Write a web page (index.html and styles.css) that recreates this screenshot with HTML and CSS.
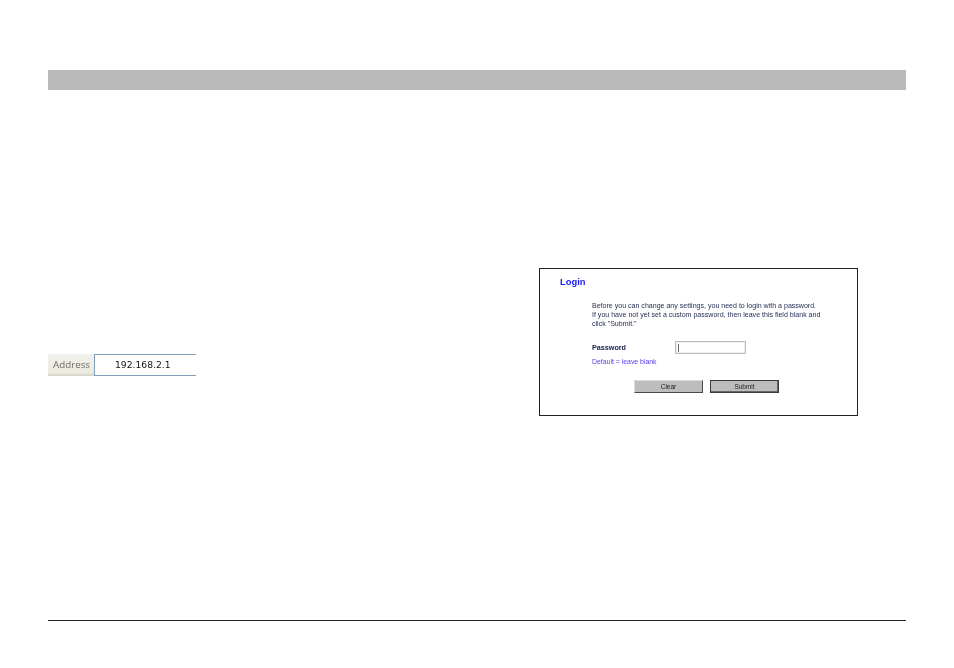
FILE: index.html
```html
<!DOCTYPE html>
<html lang="en">
<head>
<meta charset="utf-8">
<title>Login</title>
<link rel="stylesheet" href="styles.css">
</head>
<body>
<div class="page">
  <div class="header-bar"></div>
  <main class="content">
    <section class="left">
      <div class="address">
        <span class="address-label">Address</span>
        <span class="address-value">192.168.2.1</span>
      </div>
    </section>
    <section class="right">
      <div class="login">
        <h1 class="login-title">Login</h1>
        <div class="login-body">
          <p class="login-text">Before you can change any settings, you need to login with a password.<br>If you have not yet set a custom password, then leave this field blank and<br>click "Submit."</p>
          <div class="password-row">
            <span class="password-label">Password</span>
            <span class="password-input"><span class="caret"></span></span>
          </div>
          <p class="hint">Default = leave blank</p>
        </div>
        <div class="buttons">
          <span class="btn">Clear</span>
          <span class="btn btn-default">Submit</span>
        </div>
      </div>
    </section>
  </main>
  <div class="footer-line"></div>
</div>
</body>
</html>
```

FILE: styles.css
```css
* { box-sizing: border-box; }
html, body { margin: 0; padding: 0; background: #fff; }
body { font-family: "Liberation Sans", Arial, sans-serif; }
.page { width: 954px; height: 668px; padding: 70px 48px 0; overflow: hidden; }
.header-bar { height: 20px; background: #bababa; }
.content { display: flex; height: 530px; }
.left { width: 491px; padding-top: 264px; }
.right { padding-top: 178px; }
.footer-line { height: 1px; background: #231f20; }

.address { display: flex; width: 148px; height: 22px; }
.address-label {
  width: 46px; padding: 0 0 1px 5px;
  display: flex; align-items: center;
  background: linear-gradient(#f1f0ea, #ecebe2 85%, #d4d2c4);
  color: #6f6e68; font-family: "Open Sans", sans-serif; font-size: 9.8px;
  filter: blur(0.35px);
}
.address-value {
  flex: 1; padding: 0 0 1px 20px;
  display: flex; align-items: center;
  border-top: 1px solid #7f9db9; border-bottom: 1px solid #7f9db9; border-left: 1px solid #7f9db9;
  color: #111; font-family: "DejaVu Sans", sans-serif; font-size: 9.2px;
  filter: blur(0.3px);
}

.login {
  width: 319px; height: 148px;
  border: 1px solid #231f20;
  padding: 7px 0 0 20px;
  color: #1f2a50;
}
.login-title { margin: 0; font-size: 9.4px; line-height: 12px; font-weight: bold; color: #2020f5; filter: blur(0.3px); }
.login-body { padding: 13px 0 0 32px; }
.login-text { margin: 0; font-size: 7.05px; line-height: 9.2px; white-space: nowrap; filter: blur(0.35px); }
.password-row { display: flex; align-items: center; margin-top: 12px; height: 13px; }
.password-label { width: 83px; padding-top: 1px; font-size: 7.2px; font-weight: bold; color: #14204a; filter: blur(0.35px); }
.password-input { width: 71px; height: 13px; border: 1px solid #bcbcbc; box-shadow: inset 0 0 0 1px #eee; padding: 2px 0 0 2px; background: #fff; }
.caret { display: block; width: 1px; height: 8px; background: #666; }
.hint { margin: 3px 0 0; font-size: 6.9px; line-height: 9px; color: #5a38f0; filter: blur(0.35px); }
.buttons { display: flex; gap: 7px; margin: 14px 0 0 74px; }
.btn {
  width: 69px; height: 13px;
  display: flex; align-items: center; justify-content: center;
  background: #bdbdbd;
  border: 1px solid; border-color: #dcdcdc #4a4a4a #4a4a4a #dcdcdc;
  font-size: 6.5px; color: #222;
  filter: blur(0.2px);
}
.btn-default { border: 1px solid #3a3a3a; box-shadow: inset -1px -1px 0 #666; }
```
